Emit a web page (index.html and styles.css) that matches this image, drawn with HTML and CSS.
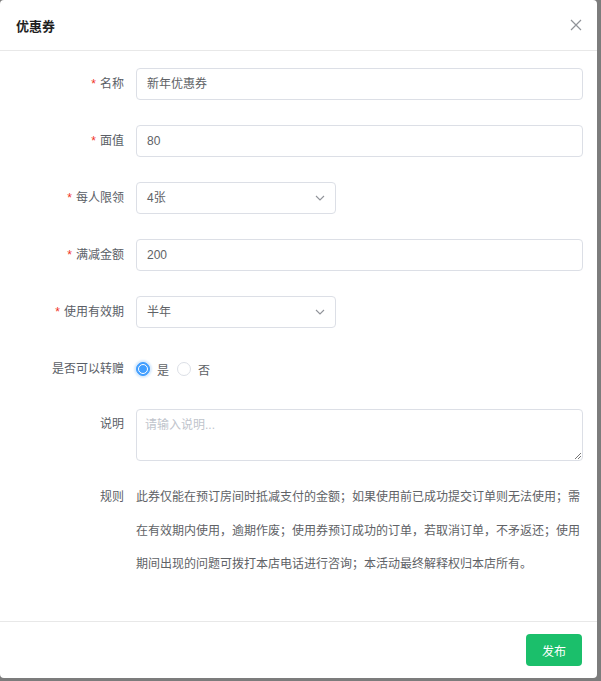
FILE: index.html
```html
<!DOCTYPE html>
<html lang="zh-CN">
<head>
<meta charset="utf-8">
<title>优惠券</title>
<link rel="stylesheet" href="styles.css">
</head>
<body>
<div class="dialog">
  <div class="dialog-header">
    <span class="dialog-title">优惠券</span>
    <span class="dialog-close" aria-label="关闭">
      <svg width="12" height="12" viewBox="0 0 12 12"><path d="M1 1L11 11M11 1L1 11" stroke="#909399" stroke-width="1.2" fill="none"/></svg>
    </span>
  </div>
  <div class="dialog-body">
    <div class="form-item">
      <label class="form-label required">名称</label>
      <div class="form-control"><div class="input">新年优惠券</div></div>
    </div>
    <div class="form-item">
      <label class="form-label required">面值</label>
      <div class="form-control"><div class="input">80</div></div>
    </div>
    <div class="form-item">
      <label class="form-label required">每人限领</label>
      <div class="form-control"><div class="input select">4张<svg class="arrow" width="10" height="6" viewBox="0 0 10 6"><path d="M1 1L5 5L9 1" stroke="#909399" stroke-width="1.1" fill="none"/></svg></div></div>
    </div>
    <div class="form-item">
      <label class="form-label required">满减金额</label>
      <div class="form-control"><div class="input">200</div></div>
    </div>
    <div class="form-item">
      <label class="form-label required">使用有效期</label>
      <div class="form-control"><div class="input select">半年<svg class="arrow" width="10" height="6" viewBox="0 0 10 6"><path d="M1 1L5 5L9 1" stroke="#909399" stroke-width="1.1" fill="none"/></svg></div></div>
    </div>
    <div class="form-item radio-item">
      <label class="form-label">是否可以转赠</label>
      <div class="form-control radios">
        <span class="radio checked"><span class="radio-circle"></span><span class="radio-text">是</span></span>
        <span class="radio"><span class="radio-circle"></span><span class="radio-text">否</span></span>
      </div>
    </div>
    <div class="form-item">
      <label class="form-label top">说明</label>
      <div class="form-control"><div class="textarea"><span class="placeholder">请输入说明...</span><svg class="resize" width="7" height="7" viewBox="0 0 7 7"><path d="M7 1L1 7M7 4L4 7" stroke="#777" stroke-width="1" fill="none"/></svg></div></div>
    </div>
    <div class="form-item rules">
      <label class="form-label">规则</label>
      <div class="form-control rules-text">此券仅能在预订房间时抵减支付的金额；如果使用前已成功提交订单则无法使用；需在有效期内使用，逾期作废；使用券预订成功的订单，若取消订单，不矛返还；使用期间出现的问题可拨打本店电话进行咨询；本活动最终解释权归本店所有。</div>
    </div>
  </div>
  <div class="dialog-footer">
    <button class="btn-primary">发布</button>
  </div>
</div>
</body>
</html>
```

FILE: styles.css
```css
html, body {
  margin: 0;
  padding: 0;
}
body {
  background: #7c7c7c;
  width: 601px;
  height: 681px;
  overflow: hidden;
  font-family: "Liberation Sans", "Noto Sans CJK SC", sans-serif;
  font-size: 12px;
  color: #606266;
}
.dialog {
  width: 597px;
  height: 678px;
  background: #fff;
  border-radius: 4px;
  display: flex;
  flex-direction: column;
  box-sizing: border-box;
}
.dialog-header {
  height: 50px;
  border-bottom: 1px solid #e8e8e8;
  display: flex;
  align-items: center;
  justify-content: space-between;
  padding: 0 15px 0 16px;
  flex: none;
}
.dialog-title {
  font-size: 13px;
  font-weight: bold;
  color: #1f1f1f;
}
.dialog-close {
  display: flex;
  width: 12px;
  height: 12px;
}
.dialog-body {
  flex: 1;
  padding: 17px 14px 0 16px;
}
.form-item {
  display: flex;
  align-items: center;
  margin-bottom: 25px;
}
.form-item.radio-item {
  margin-bottom: 24px;
}
.form-label {
  width: 120px;
  flex: none;
  box-sizing: border-box;
  padding-right: 12px;
  text-align: right;
  color: #5a5e66;
  line-height: 32px;
}
.form-label.required::before {
  content: "*";
  color: #f0331f;
  margin-right: 4px;
}
.form-label.top {
  align-self: flex-start;
  line-height: 30px;
}
.form-control {
  flex: 1;
  min-width: 0;
}
.input {
  height: 32px;
  box-sizing: border-box;
  border: 1px solid #dcdfe6;
  border-radius: 4px;
  padding: 0 10px;
  line-height: 30px;
  color: #606266;
}
.input.select {
  width: 200px;
  display: flex;
  align-items: center;
  justify-content: space-between;
  padding-right: 10px;
}
.arrow {
  display: block;
}
.radios {
  display: flex;
  align-items: center;
  height: 32px;
}
.radio {
  display: inline-flex;
  align-items: center;
  margin-right: 8px;
}
.radio-circle {
  width: 14px;
  height: 14px;
  box-sizing: border-box;
  border: 1px solid #dcdfe6;
  border-radius: 50%;
  background: #fff;
  position: relative;
}
.radio.checked .radio-circle {
  border-color: #409eff;
  background: #409eff;
  box-shadow: 0 0 2px 2px #d9ebfd;
}
.radio.checked .radio-circle::after {
  content: "";
  position: absolute;
  inset: 1px;
  border-radius: 50%;
  border: 1.5px solid #fff;
  box-sizing: border-box;
}
.radio-text {
  margin-left: 7px;
}
.textarea {
  height: 52px;
  box-sizing: border-box;
  border: 1px solid #dcdfe6;
  border-radius: 4px;
  padding: 6px 8px;
  position: relative;
}
.placeholder {
  color: #c0c4cc;
  line-height: 18px;
}
.resize {
  position: absolute;
  right: 1px;
  bottom: 1px;
}
.rules {
  align-items: flex-start;
  margin-top: -5px;
}
.rules .form-label {
  line-height: 33.5px;
}
.rules-text {
  line-height: 33.5px;
  color: #606266;
  padding-right: 2px;
}
.dialog-footer {
  flex: none;
  border-top: 1px solid #e8e8e8;
  padding: 12px 15px 12px 16px;
  display: flex;
  justify-content: flex-end;
}
.btn-primary {
  width: 56px;
  height: 32px;
  border: none;
  border-radius: 4px;
  background: #1bbf6b;
  color: #fff;
  font-family: inherit;
  font-size: 12px;
  padding: 0;
}
```
